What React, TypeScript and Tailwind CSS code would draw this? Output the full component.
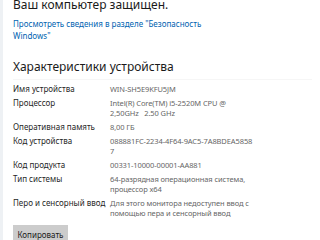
const specs: { label: string; value: string[] }[] = [
  { label: "Имя устройства", value: ["WIN-SH5E9KFU5JM"] },
  { label: "Процессор", value: ["Intel(R) Core(TM) i5-2520M CPU @", "2,50GHz   2.50 GHz"] },
  { label: "Оперативная память", value: ["8,00 ГБ"] },
  { label: "Код устройства", value: ["088881FC-2234-4F64-9AC5-7A8BDEA5858", "7"] },
  { label: "Код продукта", value: ["00331-10000-00001-AA881"] },
  { label: "Тип системы", value: ["64-разрядная операционная система,", "процессор x64"] },
  { label: "Перо и сенсорный ввод", value: ["Для этого монитора недоступен ввод с", "помощью пера и сенсорный ввод"] },
];

export default function App() {
  return (
    <div className="w-[320px] h-[240px] overflow-hidden flex bg-white font-['Noto_Sans','Open_Sans',sans-serif]">
      {/* left nav edge */}
      <div className="w-[3px] shrink-0 bg-[#eef1f4]" />

      <div className="flex-1 pl-[10px] pr-2">
        <div className="mt-[-4px] text-[12px] leading-[18px] text-[#1a1a1a]">Ваш компьютер защищен.</div>

        <a className="block mt-[4px] text-[8px] leading-[12px] text-[#0063b1]">
          Просмотреть сведения в разделе "Безопасность
          <br />
          Windows"
        </a>

        <div className="mt-[16px] text-[12px] leading-[18px] text-[#1a1a1a] pb-[3px] border-b border-[#f6f6f6]">
          Характеристики устройства
        </div>

        <div className="mt-[4px] flex flex-col gap-[4px]">
          {specs.map((s) => (
            <div key={s.label} className="flex leading-[10px]">
              <div className="w-[97px] shrink-0 text-[8px] text-[#1f1f1f]">{s.label}</div>
              <div className="text-[7.5px] tracking-[-0.1px] text-[#666666] whitespace-pre">
                {s.value.map((v, i) => (
                  <div key={i}>{v}</div>
                ))}
              </div>
            </div>
          ))}
        </div>

        <button className="mt-[7px] h-[20px] w-[55px] bg-[#cccccc] text-[8px] text-[#1a1a1a]">Копировать</button>
      </div>
    </div>
  );
}
